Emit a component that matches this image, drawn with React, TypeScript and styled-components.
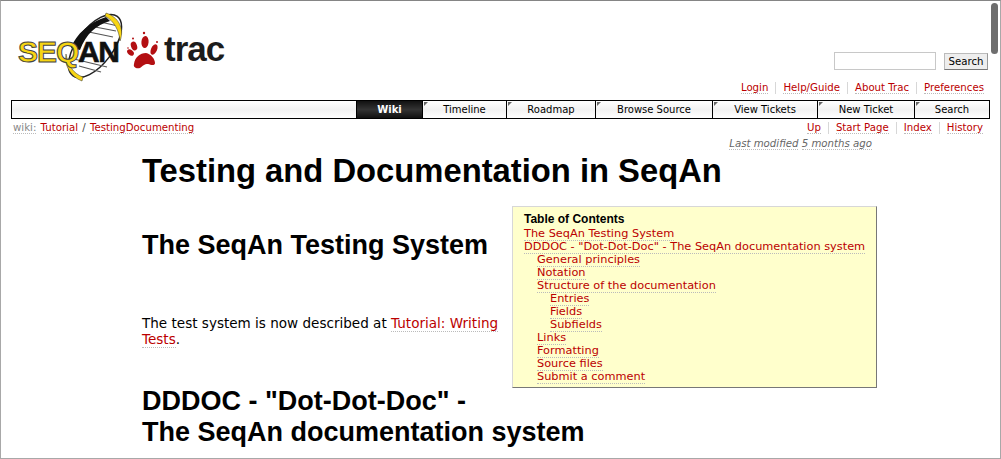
import React from 'react'
import styled, { createGlobalStyle } from 'styled-components'

const GlobalStyle = createGlobalStyle`
  html, body {
    margin: 0;
    padding: 0;
    background: #fff;
    overflow: hidden;
  }
  body {
    font-family: "DejaVu Sans", Verdana, sans-serif;
    color: #000;
  }
`

const Page = styled.div`
  position: relative;
  box-sizing: border-box;
  width: 1001px;
  height: 459px;
  overflow: hidden;
  background: #fff;
  border-top: 1px solid #858585;
  border-left: 1px solid #a8a8a8;
  border-right: 1px solid #a8a8a8;
  border-bottom: 1px solid #a8a8a8;
`

const Scrollbar = styled.div`
  position: absolute;
  top: 2px;
  right: 2px;
  width: 7px;
  height: 51px;
  border-radius: 4px;
  background: #6e6e6e;
`

const Banner = styled.div`
  display: flex;
  justify-content: space-between;
  align-items: flex-start;
  height: 69px;
  padding: 11px 12px 0 16px;
`

const SearchForm = styled.form`
  display: flex;
  align-items: center;
  gap: 8px;
  margin-top: 40px;
`

const SearchInput = styled.input`
  box-sizing: border-box;
  width: 102px;
  height: 18px;
  padding: 0 2px;
  border: 1px solid #c8c8c8;
  background: #fff;
`

const SearchButton = styled.button`
  box-sizing: border-box;
  width: 44px;
  height: 17px;
  padding: 0;
  font: 10.2px "DejaVu Sans", Verdana, sans-serif;
  color: #000;
  background: #eee;
  border: 1px solid #bbb;
  border-bottom-color: #777;
  border-right-color: #999;
`

const LinkList = styled.ul`
  display: flex;
  justify-content: flex-end;
  margin: 0;
  padding: 0 ${p => p.$right}px 0 0;
  list-style: none;
  font-size: 10.2px;
  line-height: 12px;
`

const LinkItem = styled.li`
  padding: 0 7px;
  border-left: 1px solid #d7d7d7;

  &:first-child {
    border-left: none;
  }
  &:last-child {
    padding-right: 0;
  }
`

const Link = styled.a`
  color: #b00;
  text-decoration: none;
  border-bottom: 1px dotted #bbb;
`

const MetaRow = styled.div`
  height: 12px;
  padding-top: 1px;
`

const NavBar = styled.ul`
  display: flex;
  justify-content: flex-end;
  box-sizing: border-box;
  height: 19px;
  margin: 6px 10px 0 10px;
  padding: 0;
  list-style: none;
  border: 1px solid #000;
  background: linear-gradient(#fff 0%, #f2f2f2 50%, #fff 100%);
`

const NavItem = styled.li`
  position: relative;
  box-sizing: border-box;
  width: ${p => p.$width}px;
  font-size: 10px;
  line-height: 17px;
  text-align: center;
  color: ${p => (p.$active ? '#fff' : '#000')};
  font-weight: ${p => (p.$active ? 'bold' : 'normal')};
  background: ${p => (p.$active ? 'linear-gradient(#111 0%, #333 50%, #111 100%)' : 'transparent')};
  border-left: 1px solid #000;

  &::before {
    content: '';
    display: ${p => (p.$active ? 'none' : 'block')};
    position: absolute;
    top: 1px;
    left: 1px;
    border-top: 4px solid #666;
    border-right: 4px solid transparent;
  }
`

const SubRow = styled.div`
  display: flex;
  justify-content: space-between;
  align-items: flex-start;
  padding: 3px 12px 0 12px;
  font-size: 10.2px;
  line-height: 12px;
`

const Crumbs = styled.div`
  color: #444;
  word-spacing: 1px;
`

const CrumbLabel = styled.span`
  color: #888;
  border-bottom: 1px dotted #bbb;
`

const LastModified = styled.p`
  margin: 4px 128px 0 0;
  font-size: 10.2px;
  line-height: 12px;
  font-style: italic;
  text-align: right;
  color: #676767;
`

const Underlined = styled.span`
  border-bottom: 1px dotted #bbb;
`

const Wiki = styled.div`
  width: 735px;
  margin-left: 141px;
`

const PageTitle = styled.h1`
  margin: 0;
  padding-top: 3px;
  font: bold 32.75px/36px "Liberation Sans", Arial, sans-serif;
`

const Heading = styled.h2`
  margin: ${p => p.$top}px 0 0 0;
  font: bold 27px/31px "Liberation Sans", Arial, sans-serif;
`

const Paragraph = styled.p`
  margin: 54px 0 0 0;
  font-size: 13.55px;
  line-height: 16px;
`

const Toc = styled.div`
  float: right;
  box-sizing: border-box;
  width: 365px;
  height: 182px;
  margin: 17px 0 0 12px;
  padding: 6px 11px 0 11px;
  font-size: 11.33px;
  line-height: 13px;
  background: #ffc;
  border: 1px solid #d7d7d7;
  border-right-color: #777;
  border-bottom-color: #777;
`

const TocTitle = styled.h4`
  margin: 0 0 1px 0;
  font: bold 12px/13px "Liberation Sans", Arial, sans-serif;
`

const TocLine = styled.div`
  padding-left: ${p => p.$level * 13}px;
  white-space: nowrap;
`

const Logo = () => (
  <svg width="210" height="72" viewBox="17 12 210 72">
    <ellipse cx="95" cy="46" rx="18" ry="37" transform="rotate(37 95 46)" fill="#fff" stroke="#222" strokeWidth="1.5" />
    <g stroke="#555" strokeWidth="1.2">
      <line x1="84" y1="31" x2="113" y2="37" />
      <line x1="90" y1="26" x2="116" y2="31" />
      <line x1="96" y1="21" x2="118" y2="26" />
      <line x1="79" y1="66" x2="101" y2="72" />
      <line x1="74" y1="59" x2="107" y2="67" />
    </g>
    <path d="M71 48 C76 34 90 22 106 17 L110 21 C96 25 86 34 80 50 Z" fill="#111" />
    <path d="M106 13 C118 17 125 28 120 41 C119 30 114 21 105 16 Z" fill="#f7d513" stroke="#333" strokeWidth="0.5" />
    <path d="M66 54 C68 66 74 74 83 77 L82 81 C71 77 64 66 66 54 Z" fill="#f7d513" stroke="#333" strokeWidth="0.5" />
    <text x="18" y="62" fontFamily="Liberation Sans" fontWeight="bold" fontSize="30" fill="#f7d513" stroke="#444" strokeWidth="1" letterSpacing="-1">SEQ</text>
    <text x="78" y="62" fontFamily="Liberation Sans" fontWeight="bold" fontSize="30" fill="#111" stroke="#111" strokeWidth="0.6" letterSpacing="-1.500">AN</text>
    <g fill="#b30f12">
      <path d="M134 64 C135 57 140 53 146 53 C151 54 155 59 155 63 C155 66 151 65 148 64 C144 64 143 66 140 68 C136 69 133 67 134 64 Z" />
      <ellipse cx="134" cy="46" rx="3" ry="4.5" transform="rotate(-20 134 46)" />
      <ellipse cx="130.500" cy="52.500" rx="2.600" ry="3.800" transform="rotate(-50 130.500 52.500)" />
      <ellipse cx="145" cy="42" rx="3.6" ry="6" transform="rotate(5 145 42)" />
      <ellipse cx="154" cy="49.500" rx="3" ry="5.500" transform="rotate(25 154 49.500)" />
      <circle cx="144" cy="33" r="1.200" />
      <circle cx="133" cy="38.500" r="1" />
      <circle cx="157" cy="42" r="1" />
      <circle cx="128" cy="48" r="0.800" />
    </g>
    <text x="164" y="61" fontFamily="Liberation Sans" fontWeight="bold" fontSize="35" fill="#1c1c1c" letterSpacing="-1">trac</text>
  </svg>
)

const navItems = [
  { label: 'Wiki', width: 66, active: true },
  { label: 'Timeline', width: 84 },
  { label: 'Roadmap', width: 89 },
  { label: 'Browse Source', width: 117 },
  { label: 'View Tickets', width: 105 },
  { label: 'New Ticket', width: 97 },
  { label: 'Search', width: 75 }
]

const tocEntries = [
  { label: 'The SeqAn Testing System', level: 0 },
  { label: 'DDDOC - "Dot-Dot-Doc" - The SeqAn documentation system', level: 0 },
  { label: 'General principles', level: 1 },
  { label: 'Notation', level: 1 },
  { label: 'Structure of the documentation', level: 1 },
  { label: 'Entries', level: 2 },
  { label: 'Fields', level: 2 },
  { label: 'Subfields', level: 2 },
  { label: 'Links', level: 1 },
  { label: 'Formatting', level: 1 },
  { label: 'Source files', level: 1 },
  { label: 'Submit a comment', level: 1 }
]

export default function App() {
  return (
    <Page>
      <GlobalStyle />
      <Banner>
        <Logo />
        <SearchForm>
          <SearchInput />
          <SearchButton type="button">Search</SearchButton>
        </SearchForm>
      </Banner>
      <MetaRow>
        <LinkList $right={16}>
          {['Login', 'Help/Guide', 'About Trac', 'Preferences'].map(label => (
            <LinkItem key={label}>
              <Link>{label}</Link>
            </LinkItem>
          ))}
        </LinkList>
      </MetaRow>
      <NavBar>
        {navItems.map(item => (
          <NavItem key={item.label} $width={item.width} $active={item.active}>
            {item.label}
          </NavItem>
        ))}
      </NavBar>
      <SubRow>
        <Crumbs>
          <CrumbLabel>wiki:</CrumbLabel> <Link>Tutorial</Link> / <Link>TestingDocumenting</Link>
        </Crumbs>
        <LinkList $right={5}>
          {['Up', 'Start Page', 'Index', 'History'].map(label => (
            <LinkItem key={label}>
              <Link>{label}</Link>
            </LinkItem>
          ))}
        </LinkList>
      </SubRow>
      <LastModified>
        <Underlined>Last modified</Underlined> <Underlined>5 months ago</Underlined>
      </LastModified>
      <Wiki>
        <PageTitle>Testing and Documentation in SeqAn</PageTitle>
        <Toc>
          <TocTitle>Table of Contents</TocTitle>
          {tocEntries.map(entry => (
            <TocLine key={entry.label} $level={entry.level}>
              <Link>{entry.label}</Link>
            </TocLine>
          ))}
        </Toc>
        <Heading $top={41}>The SeqAn Testing System</Heading>
        <Paragraph>
          The test system is now described at <Link>Tutorial: Writing Tests</Link>.
        </Paragraph>
        <Heading $top={39}>DDDOC - "Dot-Dot-Doc" - The SeqAn documentation system</Heading>
      </Wiki>
      <Scrollbar />
    </Page>
  )
}
